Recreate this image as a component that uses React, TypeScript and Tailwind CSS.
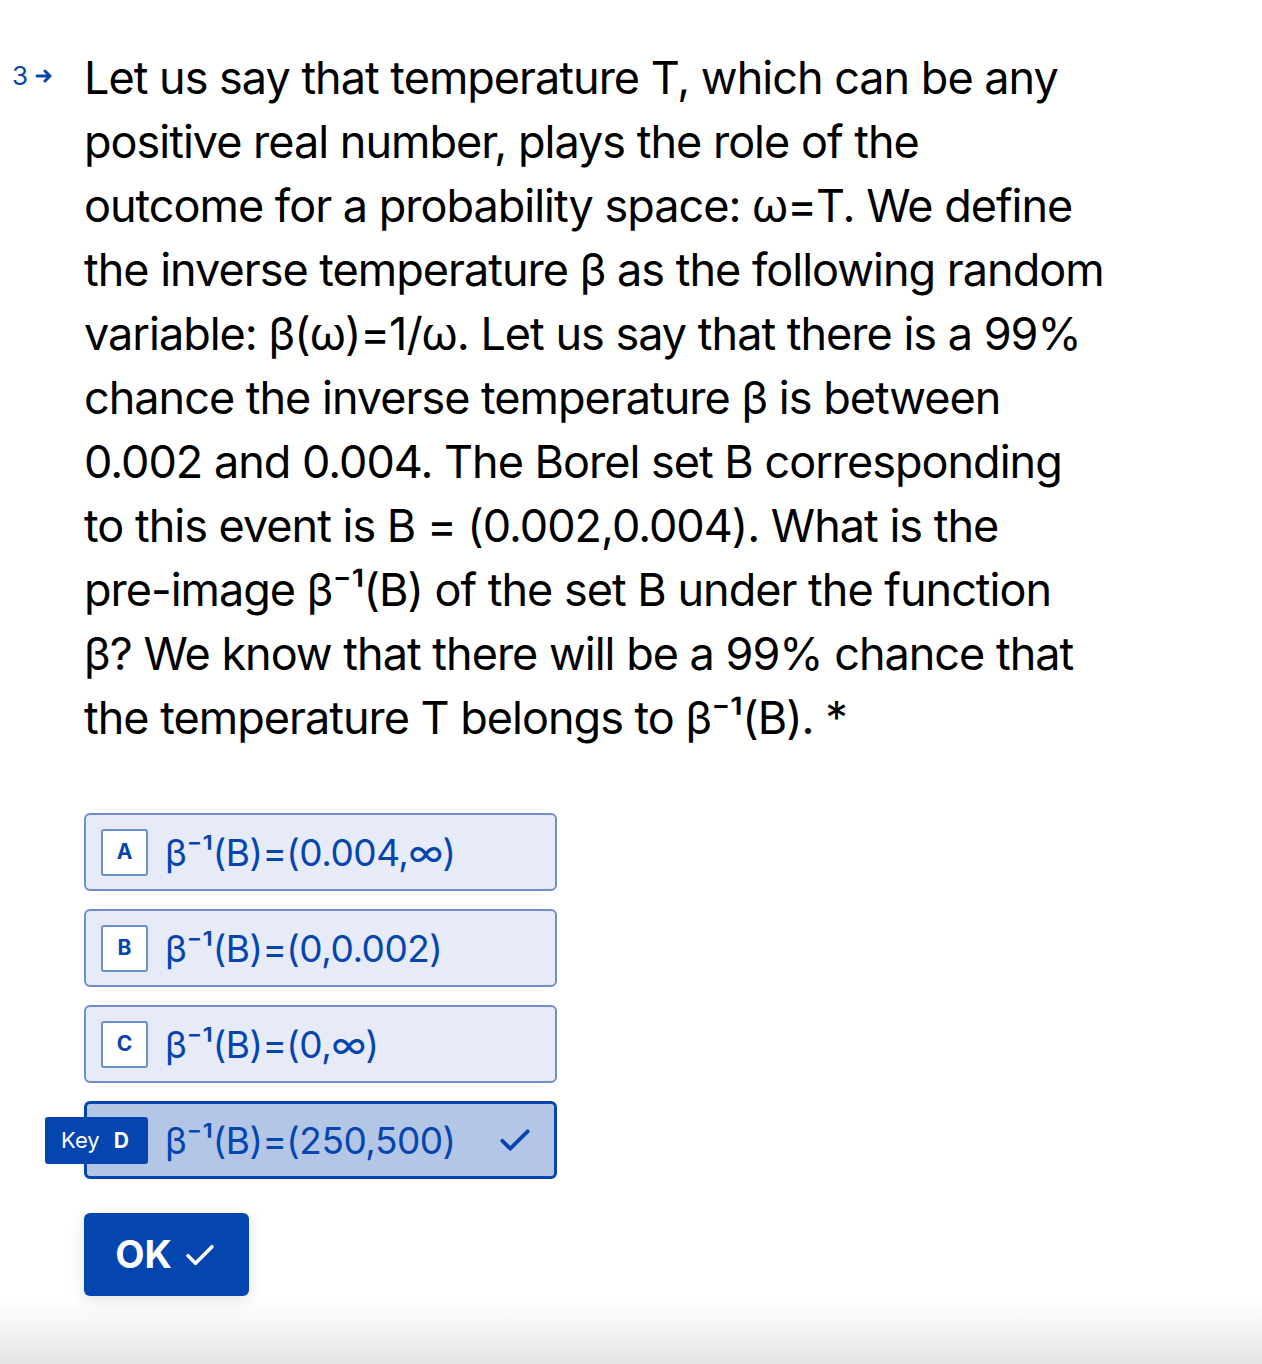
import React from 'react';

const choices = [
  { key: 'A', label: 'β⁻¹(B)=(0.004,∞)' },
  { key: 'B', label: 'β⁻¹(B)=(0,0.002)' },
  { key: 'C', label: 'β⁻¹(B)=(0,∞)' },
  { key: 'D', label: 'β⁻¹(B)=(250,500)', selected: true },
];

// line breaks follow the reference wrapping
const questionLines = [
  'Let us say that temperature T, which can be any',
  'positive real number, plays the role of the',
  'outcome for a probability space: ω=T. We define',
  'the inverse temperature β as the following random',
  'variable: β(ω)=1/ω. Let us say that there is a 99%',
  'chance the inverse temperature β is between',
  '0.002 and 0.004. The Borel set B corresponding',
  'to this event is B = (0.002,0.004). What is the',
  'pre-image β⁻¹(B) of the set B under the function',
  'β? We know that there will be a 99% chance that',
  'the temperature T belongs to β⁻¹(B). *',
];

const Check = ({ className }: { className?: string }) => (
  <svg viewBox="0 0 24 24" className={className} fill="none" stroke="currentColor" strokeWidth={2.4} strokeLinecap="round" strokeLinejoin="round">
    <path d="M4 12.5l5 5L20 6.5" />
  </svg>
);

export default function App() {
  return (
    <div
      className="relative h-[1364px] w-full overflow-hidden bg-white"
      style={{ fontFamily: 'Inter, "Noto Sans", "Liberation Sans", sans-serif' }}
    >
      <div className="flex pt-[46px]">
        {/* question number */}
        <div className="flex h-[60px] w-[84px] shrink-0 items-center pl-[12px] text-[#0445AF]">
          <span className="text-[26px] leading-none">3</span>
          <svg viewBox="0 0 18 14" className="ml-[7px] h-[14px] w-[18px]" fill="none" stroke="currentColor" strokeWidth={3} strokeLinecap="round" strokeLinejoin="round">
            <path d="M2 7h13M10 2l5 5-5 5" />
          </svg>
        </div>

        <div className="w-[1100px]">
          <h1 className="text-[45px] font-normal leading-[64px] tracking-[-1px] text-black">
            {questionLines.map((line, i) => (
              <span key={i} className="block whitespace-nowrap">{line}</span>
            ))}
          </h1>

          <div className="mt-[63px] flex w-[473px] flex-col gap-[18px]">
            {choices.map((c) =>
              c.selected ? (
                <div
                  key={c.key}
                  className="relative flex h-[78px] items-center rounded-[6px] border-[3px] border-[#0445AF] bg-[#B4C6E6] pl-[78px] pr-[20px] text-[#0445AF]"
                >
                  <div className="absolute left-[-42px] top-[13px] flex h-[47px] w-[103px] items-center gap-[14px] rounded-[3px] bg-[#0445AF] pl-[16px] text-white">
                    <span className="text-[22px]">Key</span>
                    <span className="text-[21px] font-bold">D</span>
                  </div>
                  <span className="flex-1 text-[37px] leading-none tracking-[-0.5px]">{c.label}</span>
                  <Check className="h-[38px] w-[38px]" />
                </div>
              ) : (
                <div
                  key={c.key}
                  className="flex h-[78px] items-center gap-[17px] rounded-[6px] border-2 border-[#6D8FCD] bg-[#E6EBF7] pl-[15px] text-[#0445AF]"
                >
                  <div className="flex h-[47px] w-[47px] items-center justify-center rounded-[3px] border-2 border-[#6D8FCD] bg-white text-[21px] font-bold">
                    {c.key}
                  </div>
                  <span className="text-[37px] leading-none tracking-[-0.5px]">{c.label}</span>
                </div>
              )
            )}
          </div>

          <button className="mt-[34px] flex h-[83px] w-[165px] items-center justify-center gap-[10px] rounded-[6px] bg-[#0445AF] text-white shadow-[0_4px_16px_rgba(0,0,0,0.12)]">
            <span className="text-[38px] font-bold">OK</span>
            <Check className="h-[36px] w-[36px]" />
          </button>
        </div>
      </div>

      <div className="pointer-events-none absolute bottom-0 left-0 h-[64px] w-full bg-gradient-to-b from-transparent to-[#e4e4e4]" />
    </div>
  );
}
